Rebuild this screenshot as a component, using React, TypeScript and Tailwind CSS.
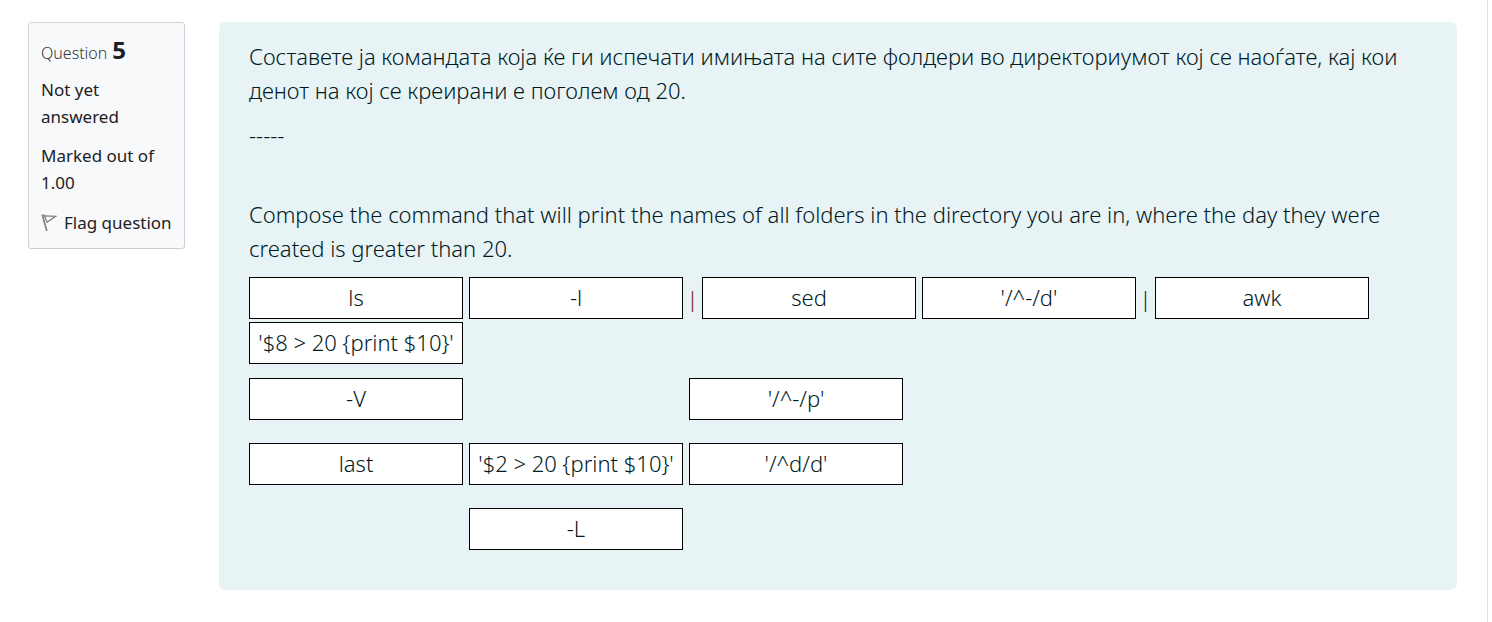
import React from "react";

type Token = { kind: "slot"; text: string } | { kind: "pipe"; className: string };

const answer: Token[] = [
  { kind: "slot", text: "ls" },
  { kind: "slot", text: "-l" },
  { kind: "pipe", className: "text-[#7a1010]" },
  { kind: "slot", text: "sed" },
  { kind: "slot", text: "'/^-/d'" },
  { kind: "pipe", className: "text-[#001a1e]" },
  { kind: "slot", text: "awk" },
  { kind: "slot", text: "'$8 > 20 {print $10}'" },
];

const choices: (string | null)[][] = [
  ["-V", null, "'/^-/p'"],
  ["last", "'$2 > 20 {print $10}'", "'/^d/d'"],
  [null, "-L", null],
];

function Tile({ text }: { text: string }) {
  return (
    <button
      type="button"
      draggable
      className="flex h-[42px] w-[214px] cursor-move items-center justify-center border border-black bg-white pb-[2px] text-[22px] whitespace-nowrap"
    >
      {text}
    </button>
  );
}

function FlagIcon() {
  return (
    <svg viewBox="0 0 16 18" className="h-[18px] w-4 shrink-0" fill="none" aria-hidden="true">
      <path d="M1.4 1.2 L5.8 17" stroke="#858585" strokeWidth="1.8" />
      <path d="M3.4 1.8 L14.6 2.3 L6 8.2 Z" stroke="#858585" strokeWidth="1.3" />
      <path d="M0.6 1.2 L4 1.4" stroke="#858585" strokeWidth="1.2" />
    </svg>
  );
}

function QuestionInfo() {
  return (
    <aside className="w-[157px] shrink-0 rounded-[3px] border border-[#cad0d7] bg-[#f8f9fa] px-3 pt-[10px] pb-3 text-[17px] leading-[27px] text-[#1d2125]">
      <h3 className="mb-[9px] flex items-baseline gap-[5px] text-[#343a40]">
        <span className="text-[16px] font-light">Question</span>
        <span className="text-[24px] leading-[33px] font-bold text-[#1d2125]">5</span>
      </h3>
      <div className="mb-3">Not yet answered</div>
      <div className="mb-[13px]">Marked out of 1.00</div>
      <button type="button" className="flex items-center gap-[7px] whitespace-nowrap">
        <FlagIcon />
        Flag question
      </button>
    </aside>
  );
}

export default function App() {
  return (
    <div className="min-h-screen bg-white pr-1 font-['Noto_Sans','Open_Sans',sans-serif]">
      <div className="flex min-h-screen items-start gap-[34px] border-r border-[#dee2e6] pt-[22px] pr-[30px] pb-[33px] pl-7">
        <QuestionInfo />
        <main className="min-w-0 flex-1 rounded-md bg-[#e7f3f5] px-[30px] pt-[17px] pb-10 text-[22px] leading-[34px] font-[350] text-[#001a1e]">
          <p className="mb-[11px]">
            Составете ја командата која ќе ги испечати имињата на сите фолдери во директориумот кој се
            наоѓате, кај кои денот на кој се креирани е поголем од 20.
          </p>
          <p className="mb-[45px]">-----</p>
          <p className="mb-3">
            Compose the command that will print the names of all folders in the directory you are in,
            where the day they were created is greater than 20.
          </p>
          <div className="flex flex-wrap items-center gap-x-[6px] gap-y-[3px]">
            {answer.map((token, i) =>
              token.kind === "slot" ? (
                <Tile key={i} text={token.text} />
              ) : (
                <span key={i} className={`flex w-[7px] justify-center ${token.className}`}>
                  |
                </span>
              ),
            )}
          </div>
          <div className="mt-[14px] flex flex-col gap-[23px]">
            {choices.map((row, i) => (
              <div key={i} className="flex gap-[6px]">
                {row.map((text, j) =>
                  text ? <Tile key={j} text={text} /> : <div key={j} className="h-[42px] w-[214px]" />,
                )}
              </div>
            ))}
          </div>
        </main>
      </div>
    </div>
  );
}
